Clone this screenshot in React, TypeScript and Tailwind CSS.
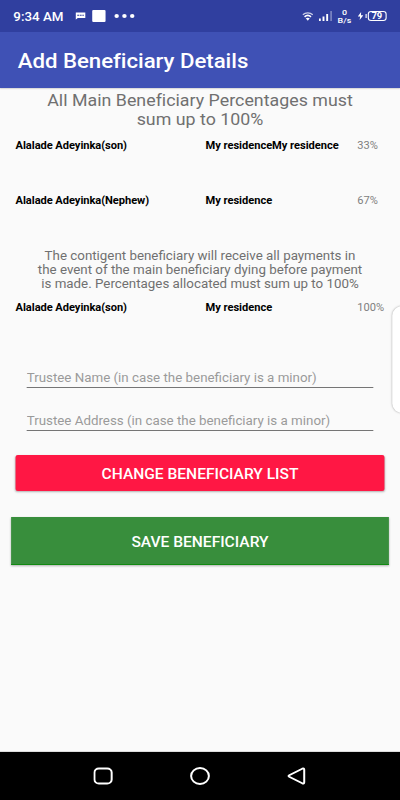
import type { ReactNode } from "react";

const mainBeneficiaries = [
  { name: "Alalade Adeyinka(son)", address: "My residenceMy residence", share: "33%" },
  { name: "Alalade Adeyinka(Nephew)", address: "My residence", share: "67%" },
];

const contingentBeneficiaries = [
  { name: "Alalade Adeyinka(son)", address: "My residence", share: "100%" },
];

function StatusBar() {
  return (
    <header className="flex h-8 items-center bg-[#303f9f] pl-3 pr-[12.5px] text-white">
      <span className="w-[56px] whitespace-nowrap pt-px text-[12px] font-medium">9:34 AM</span>
      <svg className="h-2 w-[9px]" viewBox="0 0 9 8" fill="currentColor">
        <path d="M0 0.5h9v5.5H2L0 7.8z" />
        <path d="M1.5 3.2h1.7M3.8 3.2h1.7M6.1 3.2h1.4" stroke="#303f9f" strokeWidth="1" />
      </svg>
      <span className="ml-1.5 h-3 w-3 rounded-[1px] bg-white" />
      <span className="ml-2 flex gap-[3px]">
        <i className="h-[4.5px] w-1 rounded-full bg-white" />
        <i className="h-[4.5px] w-1 rounded-full bg-white" />
        <i className="h-[4.5px] w-1 rounded-full bg-white" />
      </span>

      <svg className="ml-auto mt-px h-[9px] w-[10px]" viewBox="0 0 10 8" fill="none" stroke="currentColor" preserveAspectRatio="none">
        <path d="M0.5 2.5C3 0.2 7 0.2 9.5 2.5" strokeWidth="1.1" opacity="0.75" />
        <path d="M2.1 4.3C3.8 2.8 6.2 2.8 7.9 4.3" strokeWidth="1.4" />
        <path d="M3.2 5.6C4.2 4.8 5.8 4.8 6.8 5.6L5 7.7z" fill="currentColor" stroke="none" />
      </svg>
      <svg className="ml-[5px] h-[10px] w-3" viewBox="0 0 12 10" fill="currentColor">
        <path d="M0 7.5h1.7V10H0zM3.3 5.5H5V10H3.3zM6.6 3h1.7v7H6.6z" />
        <path d="M10.2 0H11.8V10H10.2z" opacity="0.35" />
      </svg>
      <span className="ml-[5px] w-[13px] pt-px text-center text-[8px] font-medium leading-[8px]">
        0
        <br />
        B/s
      </span>
      <svg className="ml-[5px] h-2 w-[5px]" viewBox="0 0 5 8" fill="currentColor">
        <path d="M3 0L0 4.6h2.1L1.7 8 5 3.2H2.9z" />
      </svg>
      <span className="ml-0.5 h-1 w-px bg-white" />
      <span className="ml-px flex h-[10px] w-[17px] items-center justify-center rounded-[3px] border border-white text-[8.5px] font-bold leading-none tracking-[-0.3px]">
        79
      </span>
    </header>
  );
}

function BeneficiaryRow({ name, address, share }: { name: string; address: string; share: string }) {
  return (
    <div className="flex h-[55px] pl-[14px] pt-[0.5px] text-[10px] leading-3">
      <span className="w-[171px] font-bold tracking-[-0.05px] text-black">{name}</span>
      <span className="w-[136.5px] font-bold tracking-[-0.03px] text-black">{address}</span>
      <span className="tracking-[0.05px] text-[#808080]">{share}</span>
    </div>
  );
}

function Field({ label }: { label: string }) {
  return (
    <input
      type="text"
      placeholder={label}
      aria-label={label}
      className="block h-[21px] w-full border-b border-[#757575] pt-px text-[12px] leading-4 outline-none placeholder:text-[#9a9a9a]"
    />
  );
}

function Note({ children, className }: { children: ReactNode; className: string }) {
  return <p className={`text-center text-[#707070] ${className}`}>{children}</p>;
}

function NavBar() {
  return (
    <nav className="flex h-12 items-center justify-between bg-black px-[84px] text-white">
      <svg className="h-[18px] w-[18px]" viewBox="0 0 18 18" fill="none" stroke="currentColor" strokeWidth="1.8">
        <rect x="1" y="1.5" width="15.5" height="15" rx="4" />
      </svg>
      <svg className="h-[18px] w-[18px]" viewBox="0 0 18 18" fill="none" stroke="currentColor" strokeWidth="1.8">
        <circle cx="9" cy="9" r="8" />
      </svg>
      <svg className="h-[18px] w-[18px]" viewBox="0 0 18 18" fill="none" stroke="currentColor" strokeWidth="1.8" strokeLinejoin="round">
        <path d="M14 1.7L2.3 8.2Q1.1 9 2.3 9.8L14 16.3Q15.8 17 15.8 15.2V2.8Q15.8 1 14 1.7z" />
      </svg>
    </nav>
  );
}

export default function App() {
  return (
    <div className="h-[800px] w-[400px] overflow-hidden">
      <div className="relative flex h-[800px] w-[360px] origin-left scale-x-[1.1111] flex-col overflow-hidden bg-[#fafafa] font-['Roboto',sans-serif]">
        <StatusBar />
        <div className="flex h-14 shrink-0 items-center bg-[#3f51b5] px-4 pt-0.5 shadow-[0_1px_1px_rgba(0,0,0,0.15)]">
          <h1 className="text-[20px] font-medium tracking-[-0.03px] text-white">Add Beneficiary Details</h1>
        </div>

        <main className="flex-1 border-b border-[#dcdcdc]">
          <Note className="pt-[3px] text-[16px] leading-[19px] tracking-[0.02px]">
            All Main Beneficiary Percentages must
            <br />
            sum up to 100%
          </Note>
          <div className="pt-[10px]">
            {mainBeneficiaries.map((b) => (
              <BeneficiaryRow key={b.name} {...b} />
            ))}
          </div>
          <Note className="text-[12px] leading-[14px]">
            The contigent beneficiary will receive all payments in
            <br />
            the event of the main beneficiary dying before payment
            <br />
            is made. Percentages allocated must sum up to 100%
          </Note>
          <div className="pt-[10px]">
            {contingentBeneficiaries.map((b) => (
              <BeneficiaryRow key={b.name} {...b} />
            ))}
          </div>
          <form className="flex flex-col gap-[22px] px-6 pt-[11px]">
            <Field label="Trustee Name (in case the beneficiary is a minor)" />
            <Field label="Trustee Address (in case the beneficiary is a minor)" />
          </form>
          <div className="px-[14px] pt-6">
            <button className="h-9 w-full rounded-[2px] bg-[#ff1744] pt-0.5 text-[14px] font-medium text-white shadow-[0_1px_2px_rgba(0,0,0,0.3)]">
              CHANGE BENEFICIARY LIST
            </button>
          </div>
          <div className="px-[10px] pt-[26px]">
            <button className="h-12 w-full border-b border-[#118a11] bg-[#388e3c] pt-[3px] text-[14px] font-medium text-white shadow-[0_1px_2px_rgba(0,0,0,0.3)]">
              SAVE BENEFICIARY
            </button>
          </div>
        </main>

        <NavBar />
        {/* edge panel handle */}
        <div className="absolute -right-3 top-[306px] h-[107px] w-[19px] rounded-[10px] bg-white shadow-[0_0_2px_rgba(0,0,0,0.4)]" />
      </div>
    </div>
  );
}
